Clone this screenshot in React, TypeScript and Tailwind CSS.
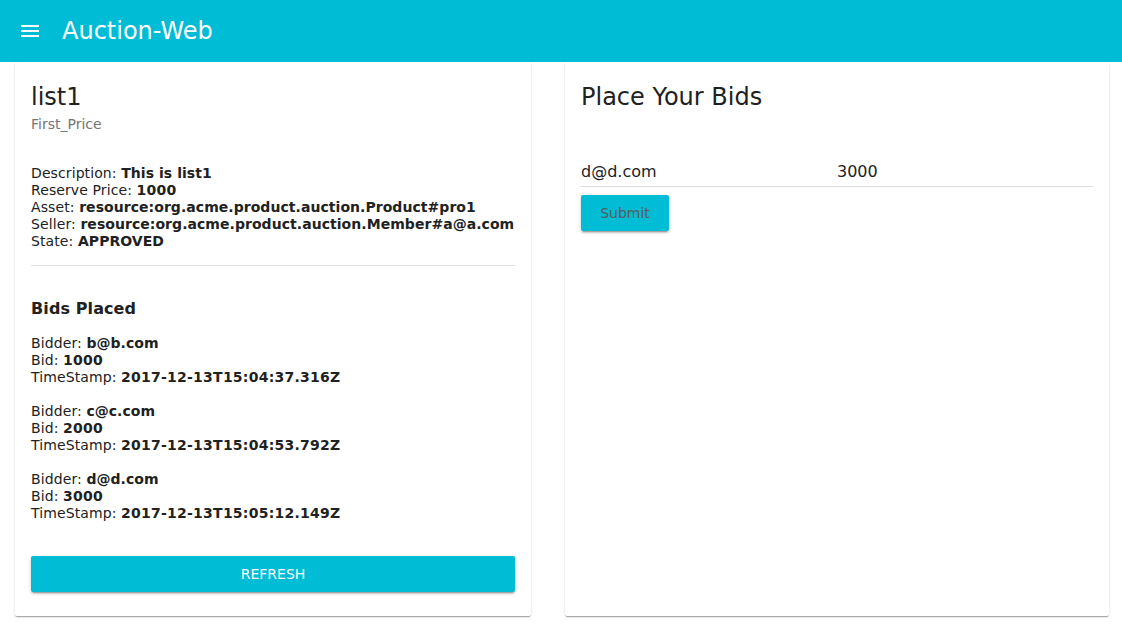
import React from 'react';

const bids = [
  { bidder: 'b@b.com', bid: '1000', ts: '2017-12-13T15:04:37.316Z' },
  { bidder: 'c@c.com', bid: '2000', ts: '2017-12-13T15:04:53.792Z' },
  { bidder: 'd@d.com', bid: '3000', ts: '2017-12-13T15:05:12.149Z' },
];

const cardShadow =
  'shadow-[0_2px_1px_-1px_rgba(0,0,0,0.2),0_1px_1px_0_rgba(0,0,0,0.14),0_1px_3px_0_rgba(0,0,0,0.12)]';
const btnShadow =
  'shadow-[0_3px_1px_-2px_rgba(0,0,0,0.2),0_2px_2px_0_rgba(0,0,0,0.14),0_1px_5px_0_rgba(0,0,0,0.12)]';

const Line: React.FC<{ label: string; value: string; digits?: boolean }> = ({ label, value, digits }) => (
  <div className="leading-[17px] tracking-[0.1px] whitespace-nowrap">
    {label}: <b className={digits ? 'font-bold tracking-[0.25px]' : 'font-bold tracking-[0.05px]'}>{value}</b>
  </div>
);

export default function App() {
  return (
    <div className="min-h-screen bg-white text-[#212121] font-['DejaVu_Sans',sans-serif]">
      {/* Toolbar */}
      <header className="h-[62px] bg-[#00bcd4] flex items-center px-[18px] text-white relative z-10">
        <svg width="24" height="24" viewBox="0 0 24 24" fill="white">
          <path d="M3 18h18v-2H3v2zm0-5h18v-2H3v2zm0-7v2h18V6H3z" />
        </svg>
        <h1 className="ml-[20px] text-[24px] leading-[28px] mt-[-1px]">Auction-Web</h1>
      </header>

      <main className="flex gap-[34px] pl-[15px]">
        {/* Listing card */}
        <section className={`w-[516px] h-[554px] bg-white rounded-[2px] px-[16px] pt-[21px] ${cardShadow}`}>
          <h2 className="text-[24px] leading-[28px]">list1</h2>
          <div className="mt-[5px] text-[14px] leading-[17px] text-[#757575]">First_Price</div>

          <div className="mt-[32px] text-[14px]">
            <Line label="Description" value="This is list1" />
            <Line label="Reserve Price" value="1000" digits />
            <Line label="Asset" value="resource:org.acme.product.auction.Product#pro1" />
            <Line label="Seller" value="resource:org.acme.product.auction.Member#a@a.com" />
            <Line label="State" value="APPROVED" />
          </div>

          <hr className="mt-[15px] border-0 border-t border-[#e0e0e0]" />

          <h3 className="mt-[33px] text-[16px] leading-[19px] font-bold tracking-[0.1px]">Bids Placed</h3>

          <div className="mt-[17px] text-[14px] flex flex-col gap-[17px]">
            {bids.map((b) => (
              <div key={b.ts}>
                <Line label="Bidder" value={b.bidder} />
                <Line label="Bid" value={b.bid} digits />
                <Line label="TimeStamp" value={b.ts} digits />
              </div>
            ))}
          </div>

          <button className={`mt-[34px] w-full h-[36px] rounded-[2px] bg-[#00bcd4] text-white text-[14px] ${btnShadow}`}>
            REFRESH
          </button>
        </section>

        {/* Bid card */}
        <section className={`w-[544px] h-[554px] bg-white rounded-[2px] px-[16px] pt-[21px] ${cardShadow}`}>
          <h2 className="text-[24px] leading-[28px]">Place Your Bids</h2>
          <div className="mt-[51px] flex border-b border-[#dddddd]">
            <div className="w-[256px] text-[16px] leading-[19px] pb-[5px]">d@d.com</div>
            <div className="w-[256px] text-[16px] leading-[19px] pb-[5px]">3000</div>
          </div>
          <button className={`mt-[8px] w-[88px] h-[36px] rounded-[2px] bg-[#00bcd4] text-[#5a5a5a] text-[14px] ${btnShadow}`}>
            Submit
          </button>
        </section>
      </main>
    </div>
  );
}
